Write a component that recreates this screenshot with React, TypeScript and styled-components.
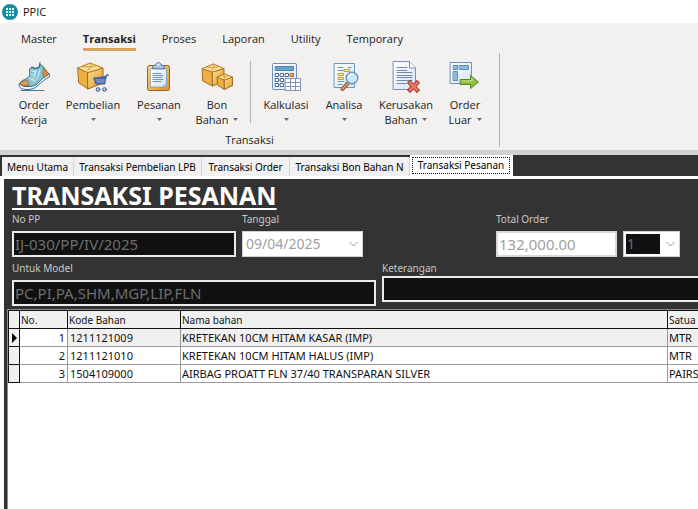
import React from "react";
import styled, { createGlobalStyle } from "styled-components";

const GlobalStyle = createGlobalStyle`
  *, *::before, *::after { box-sizing: border-box; }
  body { margin: 0; background: #fff; overflow: hidden; }
  button, input, select { font: inherit; margin: 0; }
`;

const ribbonFont = '"Open Sans", "Noto Sans", sans-serif';
const formFont = '"Noto Sans", "Open Sans", sans-serif';

const Window = styled.div`
  display: flex;
  flex-direction: column;
  min-height: 100vh;
  font-family: ${formFont};
  font-size: 11px;
  color: #111;
`;

const TitleBar = styled.header`
  display: flex;
  align-items: center;
  gap: 5px;
  height: 23px;
  padding-left: 2px;
  font: 11px/16px ${ribbonFont};
`;

const Ribbon = styled.section`
  display: flex;
  flex-direction: column;
  background: #f2f1ef;
  border-bottom: 5px solid #d2d2d2;
  font-family: ${ribbonFont};
  font-size: 11px;
  color: #222;
`;

const Menu = styled.nav`
  display: flex;
  gap: 26px;
  padding: 6px 21px 0;
`;

const MenuItem = styled.button<{ $active?: boolean }>`
  padding: 0;
  height: 22px;
  border: 0;
  border-bottom: 3px solid ${(p) => (p.$active ? "#d9a35c" : "transparent")};
  background: none;
  color: inherit;
  font-weight: ${(p) => (p.$active ? 700 : 400)};
  line-height: 18px;
`;

const Group = styled.div`
  display: flex;
  flex-direction: column;
  align-self: flex-start;
  margin: 2px 0 3px;
  border-right: 1px solid #b4b4b4;
`;

const Tools = styled.div`
  display: flex;
  padding: 8px 7px 5px 12px;
`;

const ToolButton = styled.button<{ $width: number }>`
  display: flex;
  flex-direction: column;
  align-items: center;
  width: ${(p) => p.$width}px;
  height: 66px;
  padding: 0;
  border: 0;
  background: none;
  color: inherit;
  line-height: 15px;
  white-space: nowrap;

  > svg { flex: none; margin-bottom: 4px; }
`;

const ToolLine = styled.span`
  display: flex;
  align-items: center;
  gap: 5px;
  height: 15px;
`;

const Separator = styled.span`
  width: 1px;
  height: 62px;
  margin: 0 7px 0 4px;
  background: #b4b4b4;
`;

const GroupLabel = styled.div`
  text-align: center;
  line-height: 15px;
`;

const TabBar = styled.div`
  display: flex;
  align-items: flex-end;
  height: 21px;
  padding-left: 2px;
  background: #333;
  font-size: 10px;
  line-height: 16px;
`;

const Tab = styled.button<{ $active?: boolean; $width: number }>`
  flex: none;
  width: ${(p) => p.$width}px;
  height: ${(p) => (p.$active ? 21 : 19)}px;
  padding: ${(p) => (p.$active ? "2px" : "0")};
  border: 0;
  border-right: 1px solid ${(p) => (p.$active ? "#fff" : "#d5d5d5")};
  background: ${(p) => (p.$active ? "#fff" : "#f1f1f1")};
  color: #000;
  white-space: nowrap;
`;

const FocusFrame = styled.span`
  display: block;
  height: 17px;
  border: 1px dotted #111;
  line-height: 14px;
`;

const Page = styled.main`
  display: flex;
  flex: 1;
  flex-direction: column;
  border-top: 3px solid #fff;
  border-left: 4px solid #fff;
  background: #333;
`;

const Form = styled.form`
  padding-left: 8px;
`;

const Title = styled.h1`
  margin: 0;
  color: #fff;
  font-size: 25px;
  font-weight: 700;
  line-height: 32px;
  text-decoration: underline;
  text-decoration-thickness: 2px;
  text-underline-offset: 3px;
`;

const FieldRow = styled.div`
  display: flex;
  align-items: flex-start;
  gap: 6px;
  height: 49px;
`;

const Field = styled.div<{ $width?: number; $push?: number }>`
  display: flex;
  flex-direction: column;
  flex: ${(p) => (p.$width ? `0 0 ${p.$width}px` : "1")};
  margin-left: ${(p) => p.$push || 0}px;
`;

const Label = styled.label<{ $tight?: boolean }>`
  height: ${(p) => (p.$tight ? 16 : 20)}px;
  color: #c8c8c8;
  font-size: 10px;
  line-height: 16px;
`;

const TextBox = styled.input<{ $light?: boolean; $bleed?: boolean }>`
  width: 100%;
  height: 26px;
  padding: 0 1px;
  border: 2px solid ${(p) => (p.$light ? "#d8d8d8" : "#ececec")};
  border-right-width: ${(p) => (p.$bleed ? 0 : 2)}px;
  border-radius: 0;
  outline: 0;
  background: ${(p) => (p.$light ? "#fff" : "#111")};
  color: ${(p) => (p.$light ? "#a0a0a0" : "#6e6e6e")};
  font-size: 15px;
`;

const PickerFrame = styled.div`
  display: flex;
  align-items: center;
  height: 26px;
  padding-right: 4px;
  border: 1px solid #d0d0d0;
  background: #fff;
`;

const Picker = styled.select<{ $dark?: boolean }>`
  flex: 1;
  min-width: 0;
  height: 20px;
  margin: 0 6px 0 2px;
  padding: 0 1px;
  border: 0;
  border-radius: 0;
  appearance: none;
  opacity: 1;
  background: ${(p) => (p.$dark ? "#111" : "#fff")};
  color: ${(p) => (p.$dark ? "#6e6e6e" : "#a0a0a0")};
  font-size: 14px;
  line-height: 20px;
`;

const GridFrame = styled.div`
  flex: 1;
  margin-left: 3px;
  border-top: 1px solid #8c8c8c;
  border-left: 1px solid #8c8c8c;
  background: #fff;
  overflow: hidden;
`;

const Table = styled.table`
  width: 100%;
  table-layout: fixed;
  border-collapse: separate;
  border-spacing: 0;

  th:first-child { border-left: 1px solid #111; }
  th:last-child, td:last-child { border-right: 0; }
`;

const HeadCell = styled.th<{ $width?: number }>`
  width: ${(p) => (p.$width ? `${p.$width}px` : "auto")};
  height: 19px;
  padding: 0 1px;
  border: solid #111;
  border-width: 1px 1px 1px 0;
  background: #f0f0f0;
  font-size: 10px;
  font-weight: 400;
  line-height: 16px;
  text-align: left;
  white-space: nowrap;
`;

const Cell = styled.td<{ $right?: boolean; $shaded?: boolean; $inset?: boolean }>`
  height: 18px;
  padding: 0 2px 0 ${(p) => (p.$inset ? 2 : 1)}px;
  border: solid #9a9a9a;
  border-width: 0 1px 1px 0;
  background: ${(p) => (p.$shaded ? "#f0f0f0" : "#fff")};
  line-height: 16px;
  text-align: ${(p) => (p.$right ? "right" : "left")};
  white-space: nowrap;
`;

const Marker = styled(Cell)`
  padding: 0 0 0 3px;
  border-color: #111;
  border-left-width: 1px;
  background: #f0f0f0;

  > svg { display: block; }
`;

const Caret = () => (
  <svg width="5" height="3" viewBox="0 0 5 3" aria-hidden="true">
    <path d="M0 0h5L2.500 3z" fill="#6b6b6b" />
  </svg>
);

const Chevron = () => (
  <svg width="9" height="6" viewBox="0 0 9 6" aria-hidden="true">
    <path d="M.5 1l4 4 4-4" fill="none" stroke="#999" />
  </svg>
);

const AppLogo = () => (
  <svg width="16" height="16" viewBox="0 0 16 16" aria-hidden="true">
    <circle cx="8" cy="8" r="8" fill="#188d9e" />
    <path
      d="M4 4h2v2H4zM7 4h2v2H7zM10 4h2v2h-2zM4 7h2v2H4zM7 7h2v2H7zM10 7h2v2h-2zM4 10h2v2H4zM7 10h2v2H7zM10 10h2v2h-2z"
      fill="#d9f5f6"
    />
  </svg>
);

const Icon = ({ children }: { children: React.ReactNode }) => (
  <svg width="32" height="32" viewBox="0 0 32 32" strokeLinejoin="round" strokeLinecap="round" aria-hidden="true">
    <defs>
      <linearGradient id="gold" x1="0" y1="0" x2="1" y2="1">
        <stop offset="0" stopColor="#ffe08a" />
        <stop offset="1" stopColor="#d8922b" />
      </linearGradient>
      <linearGradient id="paper" x1="0" y1="0" x2="1" y2="1">
        <stop offset="0" stopColor="#fff" />
        <stop offset="1" stopColor="#d3e4f6" />
      </linearGradient>
    </defs>
    {children}
  </svg>
);

const ShoeIcon = () => (
  <Icon>
    <path d="M3 29.500h23" stroke="#3a7ea0" strokeWidth="1.200" />
    <path d="M1 24c0 3 3 4.500 8 4.500 6 0 9-2 12-5s6-5 10-7.500c1-1.500.5-3-.5-4L20 19 3 22z" fill="#f2fafc" stroke="#2c6c87" />
    <path d="M2 23c0-3 4-4 7-5.500 3-2 3-5 2.500-9.500L14 6l3 1.500 4-1 1.500-3 2.500 2c2 3 4 5 5.500 8-3 2-6 3.500-9 7S16 25.500 11 25.500c-4 0-8 0-9-2.500z" fill="#82c3d4" stroke="#2c6c87" />
    <path d="M26 7c2 2 3.500 4 4.500 6.500L26 17c-1.500-3-1.500-7 0-10z" fill="#d98a45" stroke="#8f5a35" strokeWidth=".7" />
    <path d="M2 22.500c1.500-2 4-3 6-3.500 2 1 3 3 3 5.500-3 .5-8 .5-9-2z" fill="#d99a5c" stroke="#8f5a35" strokeWidth=".7" />
    <path d="M13 10l4 1M13 13l4 1.500M11 17l4 2M18 9l-1 5-3 6M22 9l-2 7-4 5" fill="none" stroke="#d8f0f4" />
    <path d="M14 6l3 1.500 4-1 1-5" fill="none" stroke="#2c5f7a" />
  </Icon>
);

const CartBoxIcon = () => (
  <Icon>
    <path d="M1 7l10 4.500V28L2 22z" fill="#eeb042" stroke="#a36c1e" />
    <path d="M11 11.500L26 7v15l-15 6z" fill="url(#gold)" stroke="#a36c1e" />
    <path d="M1 7l12-5 13 5-15 4.500z" fill="#ffdf94" stroke="#b57c25" />
    <path d="M5 5.500L14 6l6-1.500M14 2.500V6l-4 4" fill="none" stroke="#c38b36" strokeWidth=".8" />
    <path d="M17 17h11.500L29.500 14H32M17 17l2 6h8.500l1.500-7" fill="#4c72b5" stroke="#38568c" strokeWidth="1.200" />
    <path d="M19 19h9M20 21h7" stroke="#9eb8e3" strokeWidth=".8" />
    <circle cx="21" cy="28.500" r="1.800" fill="#c7d7ef" stroke="#34538b" />
    <circle cx="27.500" cy="28.500" r="1.800" fill="#c7d7ef" stroke="#34538b" />
  </Icon>
);

const ClipboardIcon = () => (
  <Icon>
    <rect x="4.500" y="4.500" width="22" height="25" rx="2" fill="url(#gold)" stroke="#936322" />
    <path d="M7.500 7.500h16V26h-16z" fill="url(#paper)" stroke="#7d96b8" strokeWidth=".8" />
    <path d="M10 12.500h8M10 14.500h10M10 16.500h9M10 18.500h10M10 20.500h8" stroke="#6f93c0" />
    <path d="M19 26l4.500-4.500V26z" fill="#9fb8d6" />
    <path d="M9.500 7.500c0-3 2-3 3.500-4C13.500 1 17.500 1 18 3.500c1.500 1 3.500 1 3.500 4z" fill="#a9c7ee" stroke="#4d74ac" />
    <circle cx="15.500" cy="3.500" r="1" fill="#fff" />
  </Icon>
);

const BoxesIcon = () => (
  <Icon>
    <path d="M1.500 7.500l10 3.500v14L2 20z" fill="#eeb042" stroke="#a36c1e" />
    <path d="M11.500 11L23 7.500V20l-11.500 5z" fill="url(#gold)" stroke="#a36c1e" />
    <path d="M1.500 7.500L12 3l11 4.500L11.500 11z" fill="#ffdf94" stroke="#b57c25" />
    <path d="M5 6l8 .5L18 5.500M13 3v3.500l-3 3.500" fill="none" stroke="#c38b36" strokeWidth=".8" />
    <path d="M16.500 16l7 3v9.500l-6.500-4z" fill="#eeb042" stroke="#a36c1e" />
    <path d="M23.500 19l8-3v8.500l-8 4z" fill="url(#gold)" stroke="#a36c1e" />
    <path d="M16.500 16l7.500-3 7.500 3-8 3z" fill="#ffdf94" stroke="#b57c25" />
    <path d="M20 14.500l4 1 4-1M24 15.500l-1 3" fill="none" stroke="#c38b36" strokeWidth=".8" />
  </Icon>
);

const CalculatorIcon = () => (
  <Icon>
    <rect x="2.500" y="2.500" width="24" height="26" rx="1" fill="url(#paper)" stroke="#6f8fbd" />
    <path d="M5.500 5.500h18v4h-18z" fill="#66a5cc" stroke="#4c83b0" />
    <path d="M5.500 12.500h3v3h-3zM10.500 12.500h3v3h-3zM15.500 12.500h3v3h-3zM5.500 17.500h3v3h-3zM10.500 17.500h3v3h-3zM5.500 22.500h3v3h-3zM10.500 22.500h3v3h-3z" fill="#fff" stroke="#49689c" />
    <path d="M20.500 12.500h3v3h-3z" fill="#f3ab58" stroke="#b06a26" />
    <path d="M15.500 17.500h15v12h-15z" fill="#fff" stroke="#8391bd" />
    <path d="M15.500 21.500h15M15.500 25.500h15M20.500 17.500v12M25.500 17.500v12" stroke="#8391bd" />
  </Icon>
);

const AnalysisIcon = () => (
  <Icon>
    <path d="M6.500 2.500h20v24h-20z" fill="url(#paper)" stroke="#5f9bc0" />
    <path d="M10 6.500h5M16 9.500h-6M20 6.500h3M10 20.500h6M10 23.500h4" stroke="#6f9a91" />
    <path d="M16.500 8.500h5v2h-5zM10.500 12.500h5v2h-5zM10.500 16.500h5v2h-5z" fill="#fff2b8" stroke="#c79a34" />
    <path d="M20.500 21.500l-6 6.500" stroke="#87502c" strokeWidth="4" />
    <path d="M20.500 21.500l-6 6.500" stroke="#d9965e" strokeWidth="2" />
    <circle cx="24" cy="17" r="5.800" fill="#cce9fb" stroke="#6797bf" strokeWidth="1.400" />
    <path d="M20.500 16c.5-2 2-3 4-3" fill="none" stroke="#fff" strokeWidth="1.500" />
  </Icon>
);

const DamagedIcon = () => (
  <Icon>
    <path d="M3.500.5h16l6 6.500v21.500h-22z" fill="url(#paper)" stroke="#7b8fb3" />
    <path d="M19.500.5V7h6" fill="#fff" stroke="#7b8fb3" />
    <path d="M7 6.500h10M7 9.500h10M7 11.500h15M7 14.500h15M7 16.500h15M7 19.500h15M7 22.500h9" stroke="#7187ad" />
    <path d="M20 22l7 7M27 22l-7 7" stroke="#a83a2d" strokeWidth="4.500" strokeLinecap="square" />
    <path d="M20 22l7 7M27 22l-7 7" stroke="#ea7768" strokeWidth="2.500" strokeLinecap="square" />
  </Icon>
);

const OutOrderIcon = () => (
  <Icon>
    <rect x="1.500" y="1.500" width="21" height="21" fill="url(#paper)" stroke="#6c8fc0" />
    <path d="M4.500 4.500h4v4h-4zM10.500 4.500h9v4h-9zM4.500 10.500h4v9h-4z" fill="#8bbadb" stroke="#5b90b8" />
    <path d="M11.500 18.500h10v-4l8 6.500-8 6.500v-4h-10z" fill="#91bd3b" stroke="#54852a" />
    <path d="M13 20h10v-2.500" fill="none" stroke="#cce58e" />
  </Icon>
);

type Tool = { lines: string[]; width: number; icon: React.ReactNode; menu?: boolean };

const ordering: Tool[] = [
  { lines: ["Order", "Kerja"], width: 44, icon: <ShoeIcon /> },
  { lines: ["Pembelian"], width: 74, icon: <CartBoxIcon />, menu: true },
  { lines: ["Pesanan"], width: 58, icon: <ClipboardIcon />, menu: true },
  { lines: ["Bon", "Bahan"], width: 58, icon: <BoxesIcon />, menu: true },
];

const reports: Tool[] = [
  { lines: ["Kalkulasi"], width: 56, icon: <CalculatorIcon />, menu: true },
  { lines: ["Analisa"], width: 60, icon: <AnalysisIcon />, menu: true },
  { lines: ["Kerusakan", "Bahan"], width: 64, icon: <DamagedIcon />, menu: true },
  { lines: ["Order", "Luar"], width: 54, icon: <OutOrderIcon />, menu: true },
];

const ToolItem = ({ tool }: { tool: Tool }) => (
  <ToolButton type="button" $width={tool.width}>
    {tool.icon}
    <ToolLine>{tool.lines[0]}</ToolLine>
    <ToolLine>
      {tool.lines[1]}
      {tool.menu && <Caret />}
    </ToolLine>
  </ToolButton>
);

const menus = ["Master", "Transaksi", "Proses", "Laporan", "Utility", "Temporary"];

const tabs = [
  { text: "Menu Utama", width: 72 },
  { text: "Transaksi Pembelian LPB", width: 128 },
  { text: "Transaksi Order", width: 88 },
  { text: "Transaksi Bon Bahan N", width: 120 },
];

const rows = [
  ["1", "1211121009", "KRETEKAN 10CM HITAM KASAR (IMP)", "MTR"],
  ["2", "1211121010", "KRETEKAN 10CM HITAM HALUS (IMP)", "MTR"],
  ["3", "1504109000", "AIRBAG PROATT FLN 37/40 TRANSPARAN SILVER", "PAIRS"],
];

export default function App() {
  return (
    <Window>
      <GlobalStyle />
      <TitleBar>
        <AppLogo />
        PPIC
      </TitleBar>
      <Ribbon>
        <Menu>
          {menus.map((m) => (
            <MenuItem key={m} type="button" $active={m === "Transaksi"}>
              {m}
            </MenuItem>
          ))}
        </Menu>
        <Group>
          <Tools>
            {ordering.map((t) => (
              <ToolItem key={t.lines.join()} tool={t} />
            ))}
            <Separator />
            {reports.map((t) => (
              <ToolItem key={t.lines.join()} tool={t} />
            ))}
          </Tools>
          <GroupLabel>Transaksi</GroupLabel>
        </Group>
      </Ribbon>
      <TabBar role="tablist">
        {tabs.map((t) => (
          <Tab key={t.text} type="button" role="tab" $width={t.width}>
            {t.text}
          </Tab>
        ))}
        <Tab type="button" role="tab" aria-selected $active $width={103}>
          <FocusFrame>Transaksi Pesanan</FocusFrame>
        </Tab>
      </TabBar>
      <Page>
        <Form>
          <Title>TRANSAKSI PESANAN</Title>
          <FieldRow>
            <Field $width={224}>
              <Label htmlFor="nopp">No PP</Label>
              <TextBox id="nopp" readOnly defaultValue="IJ-030/PP/IV/2025" />
            </Field>
            <Field $width={121}>
              <Label htmlFor="tanggal">Tanggal</Label>
              <PickerFrame>
                <Picker id="tanggal" disabled>
                  <option>09/04/2025</option>
                </Picker>
                <Chevron />
              </PickerFrame>
            </Field>
            <Field $width={121} $push={127}>
              <Label htmlFor="total">Total Order</Label>
              <TextBox id="total" $light readOnly defaultValue="132,000.00" />
            </Field>
            <Field $width={57}>
              <Label as="span" />
              <PickerFrame>
                <Picker aria-label="Satuan order" $dark disabled>
                  <option>1</option>
                </Picker>
                <Chevron />
              </PickerFrame>
            </Field>
          </FieldRow>
          <FieldRow>
            <Field $width={364}>
              <Label htmlFor="model">Untuk Model</Label>
              <TextBox id="model" readOnly defaultValue="PC,PI,PA,SHM,MGP,LIP,FLN" />
            </Field>
            <Field>
              <Label htmlFor="ket" $tight>
                Keterangan
              </Label>
              <TextBox id="ket" $bleed readOnly />
            </Field>
          </FieldRow>
        </Form>
        <GridFrame>
          <Table>
            <thead>
              <tr>
                <HeadCell $width={12} />
                <HeadCell $width={48}>No.</HeadCell>
                <HeadCell $width={113}>Kode Bahan</HeadCell>
                <HeadCell>Nama bahan</HeadCell>
                <HeadCell $width={30}>Satua</HeadCell>
              </tr>
            </thead>
            <tbody>
              {rows.map(([no, kode, nama, satuan], i) => (
                <tr key={no}>
                  <Marker>
                    {i === 0 && (
                      <svg width="6" height="10" viewBox="0 0 6 10" aria-label="Baris aktif">
                        <path d="M0 0l5 5-5 5z" fill="#000" />
                      </svg>
                    )}
                  </Marker>
                  <Cell $right>{no}</Cell>
                  <Cell $inset $shaded={i === 0}>{kode}</Cell>
                  <Cell $shaded={i === 0}>{nama}</Cell>
                  <Cell $shaded={i === 0}>{satuan}</Cell>
                </tr>
              ))}
            </tbody>
          </Table>
        </GridFrame>
      </Page>
    </Window>
  );
}
